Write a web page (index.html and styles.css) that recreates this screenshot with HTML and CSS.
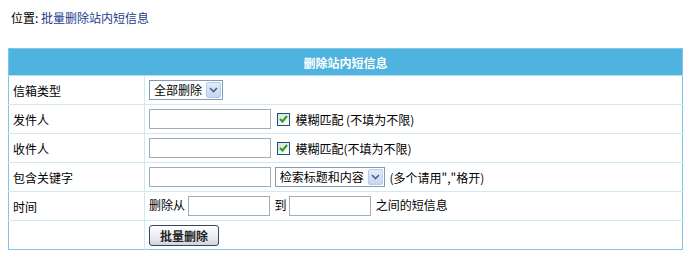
FILE: index.html
```html
<!DOCTYPE html>
<html lang="zh-CN">
<head>
	<meta charset="UTF-8">
	<title>批量删除站内短信息</title>
	<link rel="stylesheet" href="styles.css">
</head>
<body>
	<div class="place">位置: <a href="#">批量删除站内短信息</a></div>
	<table class="form_tb">
		<tr>
			<th colspan="2">删除站内短信息</th>
		</tr>
		<tr>
			<td class="lbl">信箱类型</td>
			<td>
				<span class="sel">全部删除<i class="arrow"><svg width="9" height="6" viewBox="0 0 9 6"><path d="M1 1 L4.5 4.5 L8 1" fill="none" stroke="#4d6185" stroke-width="1.6"/></svg></i></span>
			</td>
		</tr>
		<tr>
			<td class="lbl">发件人</td>
			<td>
				<span class="txt w120"></span>
				<span class="chk"><svg width="9" height="8" viewBox="0 0 9 8"><path d="M1 4 L3.5 6.5 L8 1" fill="none" stroke="#21a121" stroke-width="2"/></svg></span>
				<span class="note">模糊匹配 (不填为不限)</span>
			</td>
		</tr>
		<tr>
			<td class="lbl">收件人</td>
			<td>
				<span class="txt w120"></span>
				<span class="chk"><svg width="9" height="8" viewBox="0 0 9 8"><path d="M1 4 L3.5 6.5 L8 1" fill="none" stroke="#21a121" stroke-width="2"/></svg></span>
				<span class="note">模糊匹配(不填为不限)</span>
			</td>
		</tr>
		<tr>
			<td class="lbl">包含关键字</td>
			<td>
				<span class="txt w120"></span>
				<span class="sel sel2">检索标题和内容<i class="arrow"><svg width="9" height="6" viewBox="0 0 9 6"><path d="M1 1 L4.5 4.5 L8 1" fill="none" stroke="#4d6185" stroke-width="1.6"/></svg></i></span>
				<span class="note2">(多个请用","格开)</span>
			</td>
		</tr>
		<tr>
			<td class="lbl">时间</td>
			<td>
				删除从 <span class="txt w80"></span>
				<span class="to">到</span> <span class="txt w80"></span>
				<span class="to">之间的短信息</span>
			</td>
		</tr>
		<tr>
			<td class="lbl"></td>
			<td><span class="btn">批量删除</span></td>
		</tr>
	</table>
</body>
</html>
```

FILE: styles.css
```css
*{
	margin: 0;
	padding: 0;
}
body{
	background-color: #fff;
	color: #000;
	font-family: "Noto Sans CJK SC", "Liberation Sans", sans-serif;
	font-size: 12px;
}
.place{
	padding: 10px 0 0 11px;
	height: 38px;
	line-height: 16px;
}
.place a{
	color: #1d3a8d;
	text-decoration: none;
}
.form_tb{
	margin-left: 8px;
	width: 675px;
	border: 1px solid #7fc6e6;
	border-collapse: collapse;
}
.form_tb th{
	height: 26px;
	padding: 0;
	background-color: #4eb3de;
	color: #fff;
	font-weight: bold;
	text-align: center;
	border-bottom: 1px solid #b6dff1;
}
.form_tb td{
	height: 28px;
	padding: 0 0 0 4px;
	border-bottom: 1px solid #cfe8f4;
	vertical-align: middle;
	white-space: nowrap;
}
.form_tb td.lbl{
	width: 131px;
	border-right: 1px solid #cfe8f4;
}
.form_tb tr:last-child td{
	border-bottom: none;
}
.sel{
	display: inline-flex;
	align-items: center;
	height: 20px;
	padding: 0 0 0 4px;
	border: 1px solid #7f9db9;
	box-sizing: border-box;
	vertical-align: middle;
	line-height: 18px;
}
.sel2{
	margin-left: 1px;
}
.arrow{
	display: inline-flex;
	align-items: center;
	justify-content: center;
	width: 15px;
	height: 16px;
	margin: 0 1px 0 4px;
	border: 1px solid #b8cbeb;
	border-radius: 2px;
	background: linear-gradient(#e4ecfb, #c5d6f3);
	box-sizing: border-box;
}
.txt{
	display: inline-block;
	height: 20px;
	border: 1px solid #a5acb5;
	box-sizing: border-box;
	vertical-align: middle;
	background-color: #fff;
}
.w120{
	width: 122px;
}
.w80{
	width: 82px;
}
.chk{
	display: inline-flex;
	align-items: center;
	justify-content: center;
	width: 13px;
	height: 13px;
	margin: 0 3px 0 3px;
	border: 1px solid #1c5180;
	box-sizing: border-box;
	vertical-align: middle;
	background: linear-gradient(135deg, #dcdcd7, #fff);
}
.note{
	vertical-align: middle;
}
.note2{
	margin-left: 2px;
	vertical-align: middle;
}
.to{
	margin-left: 2px;
}
.btn{
	display: inline-block;
	width: 70px;
	height: 21px;
	line-height: 19px;
	text-align: center;
	font-weight: bold;
	color: #222;
	border: 1px solid #33475f;
	border-radius: 3px;
	box-sizing: border-box;
	background: linear-gradient(#ffffff, #e6e7ee 70%, #cfd2dc);
	vertical-align: middle;
}
```
